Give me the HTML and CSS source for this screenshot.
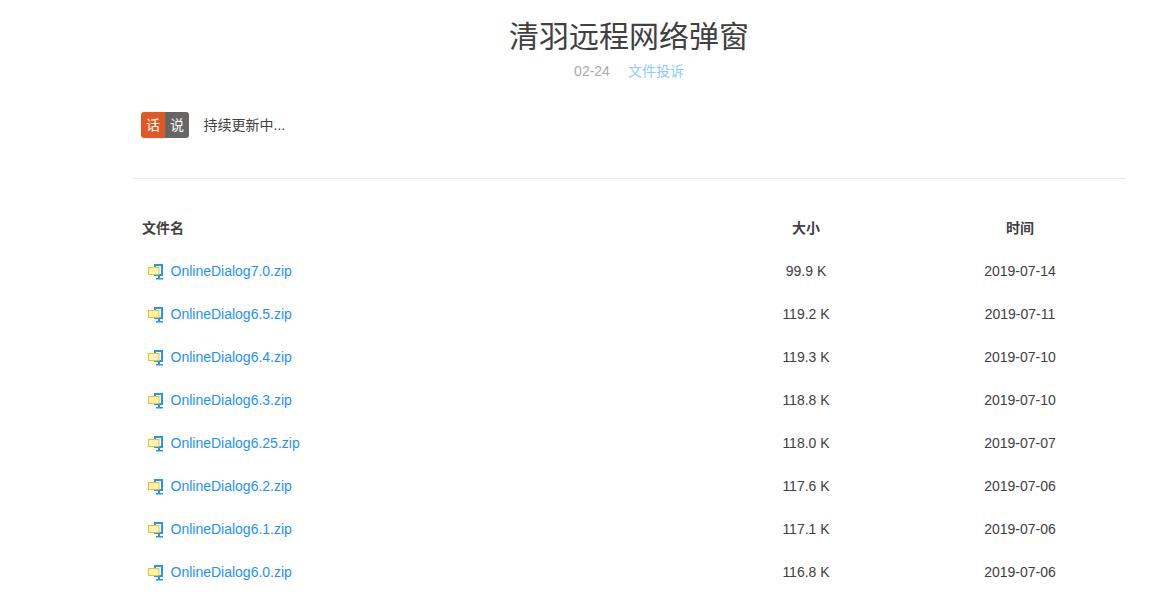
FILE: index.html
```html
<!DOCTYPE html>
<html lang="zh-CN">
<head>
<meta charset="utf-8">
<title>清羽远程网络弹窗</title>
<link rel="stylesheet" href="styles.css">
</head>
<body>
<svg class="sprite" width="0" height="0" aria-hidden="true">
  <symbol id="file-icon" viewBox="0 0 16 16">
    <path fill="#2196f3" fill-rule="evenodd" d="M6 0h9v12H6zM8 2v8h5V2z"/>
    <path fill="#2196f3" d="M10 12h2v2h-2zM8 14h7v1.500H8z"/>
    <path fill="#ffc107" d="M0 3h11.500v8H0z"/>
    <path fill="#fff2bd" d="M1 4h9.500v6H1z"/>
  </symbol>
</svg>
<main class="page">
  <header class="head">
    <h1 class="title">清羽远程网络弹窗</h1>
    <p class="meta"><span class="date">02-24</span><a class="report" href="#">文件投诉</a></p>
  </header>
  <section class="note">
    <span class="badge"><span class="badge-a">话</span><span class="badge-b">说</span></span>
    <span class="note-text">持续更新中...</span>
  </section>
  <hr class="rule">
  <table class="files">
    <thead>
      <tr><th class="name">文件名</th><th class="size">大小</th><th class="time">时间</th></tr>
    </thead>
    <tbody>
      <tr><td class="name"><a href="#"><svg class="icon"><use href="#file-icon"/></svg>OnlineDialog7.0.zip</a></td><td class="size">99.9 K</td><td class="time">2019-07-14</td></tr>
      <tr><td class="name"><a href="#"><svg class="icon"><use href="#file-icon"/></svg>OnlineDialog6.5.zip</a></td><td class="size">119.2 K</td><td class="time">2019-07-11</td></tr>
      <tr><td class="name"><a href="#"><svg class="icon"><use href="#file-icon"/></svg>OnlineDialog6.4.zip</a></td><td class="size">119.3 K</td><td class="time">2019-07-10</td></tr>
      <tr><td class="name"><a href="#"><svg class="icon"><use href="#file-icon"/></svg>OnlineDialog6.3.zip</a></td><td class="size">118.8 K</td><td class="time">2019-07-10</td></tr>
      <tr><td class="name"><a href="#"><svg class="icon"><use href="#file-icon"/></svg>OnlineDialog6.25.zip</a></td><td class="size">118.0 K</td><td class="time">2019-07-07</td></tr>
      <tr><td class="name"><a href="#"><svg class="icon"><use href="#file-icon"/></svg>OnlineDialog6.2.zip</a></td><td class="size">117.6 K</td><td class="time">2019-07-06</td></tr>
      <tr><td class="name"><a href="#"><svg class="icon"><use href="#file-icon"/></svg>OnlineDialog6.1.zip</a></td><td class="size">117.1 K</td><td class="time">2019-07-06</td></tr>
      <tr><td class="name"><a href="#"><svg class="icon"><use href="#file-icon"/></svg>OnlineDialog6.0.zip</a></td><td class="size">116.8 K</td><td class="time">2019-07-06</td></tr>
    </tbody>
  </table>
</main>
</body>
</html>
```
FILE: styles.css
```css
* { box-sizing: border-box; }
html, body { margin: 0; padding: 0; background: #fff; }
body {
  color: #404040;
  font-family: "Liberation Sans", "Noto Sans CJK SC", sans-serif;
  font-size: 14px;
  overflow: hidden;
  height: 604px;
}
.sprite { display: block; height: 0; }
.page { width: 993px; margin-left: 133px; }
.head { padding-top: 15px; padding-right: 1px; text-align: center; }
.title { margin: 0; font-size: 30px; font-weight: 400; line-height: 44px; color: #404040; }
.meta { margin: 0; padding-top: 2px; font-size: 14px; line-height: 20px; }
.date { color: #aaa; margin-right: 18px; }
.report { color: #87cefa; text-decoration: none; }
.note { display: flex; align-items: center; margin-top: 31px; padding-left: 8px; height: 26px; }
.badge { display: flex; height: 26px; border-radius: 3px; overflow: hidden; color: #fff; line-height: 26px; }
.badge-a { width: 24px; background: #e25822; text-align: center; }
.badge-b { width: 24px; background: #666; text-align: center; }
.note-text { margin-left: 14.5px; padding-bottom: 2px; }
.rule { margin: 40px 0 0; border: 0; border-top: 1px solid #eee; }
.files { width: 100%; margin-top: 27px; border-collapse: collapse; table-layout: fixed; }
.files th, .files td { height: 43px; padding: 0 9px; vertical-align: middle; }
.files th { padding-bottom: 2px; font-size: 14px; font-weight: 700; }
.name { width: 565px; text-align: left; }
.size { width: 216px; text-align: center; }
.time { width: 212px; text-align: center; }
.files a { display: flex; align-items: center; padding-left: 6px; color: #1e90ff; text-decoration: none; }
.icon { width: 16px; height: 16px; margin: 2px 6.5px 0 0; flex: none; }
```
